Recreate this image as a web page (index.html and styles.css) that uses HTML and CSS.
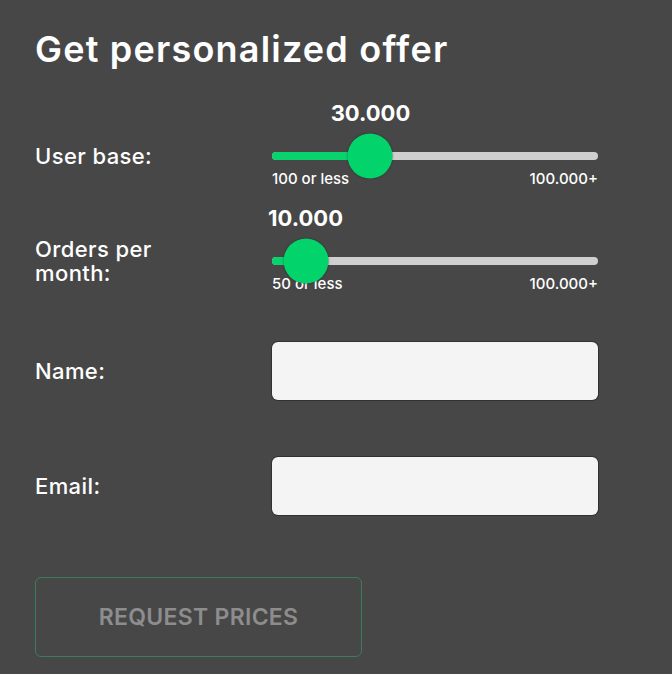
FILE: index.html
```html
<!DOCTYPE html>
<html lang="en">
<head>
<meta charset="utf-8">
<title>Get personalized offer</title>
<link rel="stylesheet" href="styles.css">
</head>
<body>
<main class="offer">
  <h1 class="offer-title">Get personalized offer</h1>
  <form class="offer-form">
    <div class="field field-slider" style="--pos: 30.2%">
      <span class="field-label">User base:</span>
      <div class="slider-value-row"><span class="slider-value">30.000</span></div>
      <div class="slider-track-row">
        <div class="slider-track"><div class="slider-fill"></div><div class="slider-thumb"></div></div>
      </div>
      <div class="slider-scale"><span>100 or less</span><span>100.000+</span></div>
    </div>
    <div class="field field-slider field-slider-second" style="--pos: 10.3%">
      <span class="field-label">Orders per month:</span>
      <div class="slider-value-row"><span class="slider-value">10.000</span></div>
      <div class="slider-track-row">
        <div class="slider-track"><div class="slider-fill"></div><div class="slider-thumb"></div></div>
      </div>
      <div class="slider-scale"><span>50 or less</span><span>100.000+</span></div>
    </div>
    <label class="field field-text field-name">
      <span class="field-label">Name:</span>
      <input class="text-input" type="text">
    </label>
    <label class="field field-text field-email">
      <span class="field-label">Email:</span>
      <input class="text-input" type="email">
    </label>
    <button class="submit-btn" type="button">REQUEST PRICES</button>
  </form>
</main>
</body>
</html>
```
FILE: styles.css
```css
html, body {
  margin: 0;
  padding: 0;
  background: #474747;
}
body {
  font-family: "Inter", "Liberation Sans", sans-serif;
  color: #ffffff;
  width: 672px;
  height: 674px;
  overflow: hidden;
}
.offer {
  padding-left: 35px;
}
.offer-title {
  margin: 29px 0 0;
  font-size: 36px;
  line-height: 40px;
  font-weight: 600;
  letter-spacing: 1.2px;
}
.offer-form {
  margin-top: 31px;
  display: flex;
  flex-direction: column;
}
.field {
  display: grid;
  grid-template-columns: 237px 326px;
}
.field-label {
  font-size: 22px;
  line-height: 24px;
  font-weight: 500;
  letter-spacing: 0.4px;
  max-width: 165px;
}
.field-slider {
  grid-template-rows: 42px 28px 18px;
}
.field-slider-second {
  margin-top: 17px;
}
.field-slider .field-label {
  grid-column: 1;
  grid-row: 2;
  align-self: center;
}
.slider-value-row {
  grid-column: 2;
  grid-row: 1;
  position: relative;
}
.slider-value {
  position: absolute;
  top: 0;
  left: var(--pos);
  transform: translateX(-50%);
  font-size: 22px;
  line-height: 26px;
  font-weight: 700;
  white-space: nowrap;
}
.slider-track-row {
  grid-column: 2;
  grid-row: 2;
  display: flex;
  align-items: center;
}
.slider-track {
  position: relative;
  width: 100%;
  height: 8px;
  border-radius: 4px;
  background: #cfcfcf;
}
.slider-fill {
  width: var(--pos);
  height: 100%;
  border-radius: 4px;
  background: #08d36c;
}
.slider-thumb {
  position: absolute;
  left: var(--pos);
  top: 50%;
  width: 45px;
  height: 45px;
  transform: translate(-50%, -50%);
  border-radius: 50%;
  background: #02d46b;
  box-shadow: 0 0 2px rgba(0, 0, 0, 0.45);
}
.slider-scale {
  grid-column: 2;
  grid-row: 3;
  display: flex;
  justify-content: space-between;
  font-size: 15px;
  line-height: 18px;
  font-weight: 500;
}
.field-text {
  align-items: center;
}
.field-name {
  margin-top: 49px;
}
.field-email {
  margin-top: 57px;
}
.text-input {
  box-sizing: border-box;
  width: 326px;
  height: 58px;
  border: none;
  border-radius: 6px;
  background: #f4f4f4;
  box-shadow: 0 0 0 1px rgba(0, 0, 0, 0.3);
  padding: 0 12px;
  font: inherit;
  font-size: 18px;
  outline: none;
}
.submit-btn {
  margin-top: 62px;
  box-sizing: border-box;
  width: 327px;
  height: 80px;
  border: 1px solid #3b7d5d;
  border-radius: 6px;
  background: transparent;
  color: #8d8d8d;
  font-family: inherit;
  font-size: 23px;
  font-weight: 600;
  letter-spacing: 0.3px;
  padding: 0;
  cursor: pointer;
}
```
